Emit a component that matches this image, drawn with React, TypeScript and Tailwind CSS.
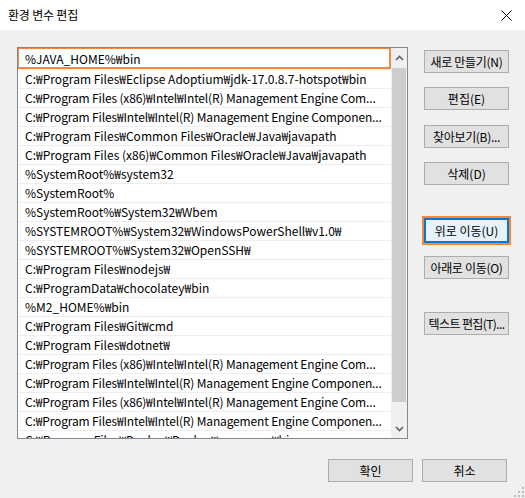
const paths = [
  "C:₩Program Files₩Eclipse Adoptium₩jdk-17.0.8.7-hotspot₩bin",
  "C:₩Program Files (x86)₩Intel₩Intel(R) Management Engine Com...",
  "C:₩Program Files₩Intel₩Intel(R) Management Engine Componen...",
  "C:₩Program Files₩Common Files₩Oracle₩Java₩javapath",
  "C:₩Program Files (x86)₩Common Files₩Oracle₩Java₩javapath",
  "%SystemRoot%₩system32",
  "%SystemRoot%",
  "%SystemRoot%₩System32₩Wbem",
  "%SYSTEMROOT%₩System32₩WindowsPowerShell₩v1.0₩",
  "%SYSTEMROOT%₩System32₩OpenSSH₩",
  "C:₩Program Files₩nodejs₩",
  "C:₩ProgramData₩chocolatey₩bin",
  "%M2_HOME%₩bin",
  "C:₩Program Files₩Git₩cmd",
  "C:₩Program Files₩dotnet₩",
  "C:₩Program Files (x86)₩Intel₩Intel(R) Management Engine Com...",
  "C:₩Program Files₩Intel₩Intel(R) Management Engine Componen...",
  "C:₩Program Files (x86)₩Intel₩Intel(R) Management Engine Com...",
  "C:₩Program Files₩Intel₩Intel(R) Management Engine Componen...",
  "C:₩Program Files₩Docker₩Docker₩resources₩bin",
];

const font = { fontFamily: '"Noto Sans CJK KR", "Noto Sans", sans-serif' };

function Btn({ label, className = "" }: { label: string; className?: string }) {
  return (
    <button
      type="button"
      className={`flex h-[23px] w-[85px] items-center justify-center whitespace-nowrap border border-[#adadad] bg-[#e1e1e1] text-[12px] leading-none text-black ${className}`}
    >
      {label}
    </button>
  );
}

export default function App() {
  return (
    <div className="flex h-[498px] w-[525px] flex-col bg-[#f0f0f0] text-black" style={font}>
      {/* title bar */}
      <div className="flex h-[30px] items-center justify-between bg-white pl-[8px] pr-[13px]">
        <span className="text-[12px] tracking-[-0.2px]">환경 변수 편집</span>
        <svg width="11" height="11" viewBox="0 0 11 11">
          <path d="M0.5 0.5 L10.5 10.5 M10.5 0.5 L0.5 10.5" stroke="#000" strokeWidth="1" />
        </svg>
      </div>

      <div className="flex pl-[17px] pt-[17px]">
        {/* list */}
        <div className="flex h-[392px] w-[391px] border border-[#828790] bg-white">
          <div className="flex min-w-0 flex-1 flex-col overflow-hidden text-[12px]">
            <div className="-ml-px -mt-px h-[22px] w-[374px] shrink-0 border-2 border-[#f5883a] pl-[6px] pt-[2px] leading-[16px]">
              %JAVA_HOME%₩bin
            </div>
            {paths.map((p, i) => (
              <div
                key={i}
                className={`h-[19px] shrink-0 overflow-hidden whitespace-nowrap border-t border-[#eeeeee] pl-[7px] leading-[18px] ${
                  p.endsWith("...") ? "tracking-[-0.15px]" : ""
                }`}
              >
                {p}
              </div>
            ))}
          </div>
          {/* scrollbar */}
          <div className="flex w-[16px] flex-col items-center bg-[#f0f0f0]">
            <div className="flex h-[20px] w-full items-center justify-center">
              <svg width="9" height="6" viewBox="0 0 9 6">
                <path d="M1 5 L4.5 1.5 L8 5" fill="none" stroke="#606060" strokeWidth="1.6" />
              </svg>
            </div>
            <div className="h-[334px] w-[14px] bg-[#cdcdcd]" />
            <div className="flex-1" />
            <div className="flex h-[18px] w-full items-center justify-center">
              <svg width="9" height="6" viewBox="0 0 9 6">
                <path d="M1 1 L4.5 4.5 L8 1" fill="none" stroke="#606060" strokeWidth="1.6" />
              </svg>
            </div>
          </div>
        </div>

        {/* side buttons */}
        <div className="ml-[16px] flex flex-col">
          <Btn label="새로 만들기(N)" className="mt-[3px] tracking-[-0.3px]" />
          <Btn label="편집(E)" className="mt-[14px]" />
          <Btn label="찾아보기(B)..." className="mt-[15px] tracking-[-0.3px]" />
          <Btn label="삭제(D)" className="mt-[14px]" />
          <div className="-ml-[2px] mt-[31px] h-[29px] w-[89px] border-2 border-[#f5883a]">
            <button
              type="button"
              className="flex h-full w-full items-center justify-center whitespace-nowrap border-2 border-[#0078d7] bg-[#e5f1fb] text-[12px] leading-none"
            >
              위로 이동(U)
            </button>
          </div>
          <Btn label="아래로 이동(O)" className="mt-[11px] tracking-[-0.3px]" />
          <Btn label="텍스트 편집(T)..." className="mt-[33px] tracking-[-0.6px]" />
        </div>
      </div>

      {/* bottom buttons */}
      <div className="relative flex flex-1 justify-end gap-[9px] pr-[18px] pt-[20px]">
        <Btn label="확인" />
        <Btn label="취소" />
        <svg className="absolute bottom-[1px] right-[1px]" width="12" height="12" viewBox="0 0 12 12">
          {[
            [10, 2],
            [10, 6],
            [6, 6],
            [10, 10],
            [6, 10],
            [2, 10],
          ].map(([x, y], i) => (
            <rect key={i} x={x} y={y} width="2" height="2" fill="#bcbcbc" />
          ))}
        </svg>
      </div>
    </div>
  );
}
